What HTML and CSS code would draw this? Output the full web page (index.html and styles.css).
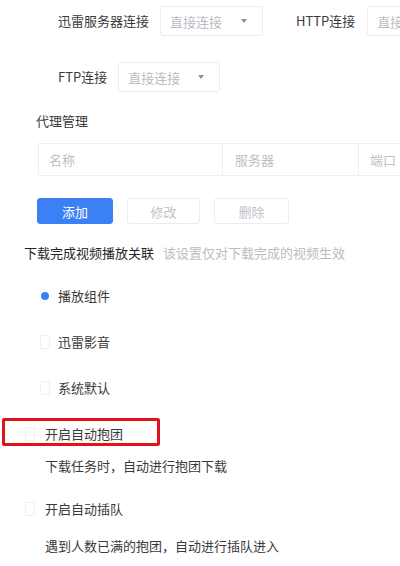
FILE: index.html
```html
<!DOCTYPE html>
<html lang="zh-CN">
<head>
<meta charset="utf-8">
<link rel="stylesheet" href="styles.css">
</head>
<body>
<div class="page">
  <div class="conn-row row1">
    <span class="label">迅雷服务器连接</span>
    <div class="select w103"><span class="ph">直接连接</span><span class="arrow"></span></div>
    <span class="label http">HTTP连接</span>
    <div class="select w103"><span class="ph">直接连接</span><span class="arrow"></span></div>
  </div>
  <div class="conn-row row2">
    <span class="label">FTP连接</span>
    <div class="select w102"><span class="ph">直接连接</span><span class="arrow"></span></div>
  </div>

  <div class="section-title">代理管理</div>
  <div class="proxy-table">
    <div class="cell c1">名称</div>
    <div class="cell c2">服务器</div>
    <div class="cell c3">端口</div>
  </div>
  <div class="btns">
    <button class="btn primary">添加</button>
    <button class="btn">修改</button>
    <button class="btn del">删除</button>
  </div>

  <div class="heading">下载完成视频播放关联<span class="hint">该设置仅对下载完成的视频生效</span></div>

  <div class="opt opt1"><span class="radio on"></span><span>播放组件</span></div>
  <div class="opt opt2"><span class="box"></span><span>迅雷影音</span></div>
  <div class="opt opt3"><span class="box"></span><span>系统默认</span></div>

  <div class="check check1"><span class="box"></span><span>开启自动抱团</span><div class="highlight"></div></div>
  <div class="desc desc1">下载任务时，自动进行抱团下载</div>
  <div class="check check2"><span class="box"></span><span>开启自动插队</span></div>
  <div class="desc desc2">遇到人数已满的抱团，自动进行插队进入</div>
</div>
</body>
</html>
```

FILE: styles.css
```css
html, body {
  margin: 0;
  padding: 0;
  background: #ffffff;
}
body {
  width: 400px;
  height: 566px;
  overflow: hidden;
  font-family: "Noto Sans CJK SC", "Noto Sans", sans-serif;
  font-size: 13px;
  color: #3a3a3a;
}
.page {
  display: flex;
  flex-direction: column;
  width: 400px;
}
.conn-row {
  display: flex;
  align-items: center;
  padding-left: 58px;
  height: 30px;
  white-space: nowrap;
}
.row1 { margin-top: 6px; }
.row2 { margin-top: 26px; }
.label {
  line-height: 20px;
  color: #3a3a3a;
  margin-right: 11px;
}
.label.http {
  margin-left: 33px;
  margin-right: 12px;
}
.select {
  flex: none;
  box-sizing: border-box;
  height: 30px;
  border: 1px solid #ececec;
  border-radius: 3px;
  display: flex;
  align-items: center;
  justify-content: space-between;
  padding: 0 15px 0 9px;
}
.w103 { width: 103px; }
.w102 { width: 102px; }
.ph { color: #b9bcc2; }
.arrow {
  width: 0;
  height: 0;
  border-left: 3px solid transparent;
  border-right: 3px solid transparent;
  border-top: 4px solid #8e9196;
}
.section-title {
  margin-top: 19px;
  margin-left: 36px;
  line-height: 20px;
  color: #3a3a3a;
}
.proxy-table {
  margin-top: 12px;
  margin-left: 38px;
  display: flex;
  height: 33px;
  box-sizing: border-box;
  border: 1px solid #efefef;
  border-right: none;
  width: 380px;
}
.cell {
  box-sizing: border-box;
  display: flex;
  align-items: center;
  padding-left: 10px;
  color: #bcbfc4;
  border-right: 1px solid #efefef;
}
.c1 { width: 184px; }
.c2 { width: 136px; padding-left: 12px; }
.c3 { flex: 1; padding-left: 11px; border-right: none; }
.btns {
  margin-top: 22px;
  margin-left: 37px;
  display: flex;
  gap: 14px;
}
.btn {
  box-sizing: border-box;
  height: 26px;
  width: 73px;
  border: 1px solid #ececec;
  border-radius: 3px;
  background: #fff;
  color: #bfc2c7;
  font-family: inherit;
  font-size: 13px;
  padding: 0;
}
.btn.primary {
  width: 76px;
  background: #3b80f4;
  border-color: #3b80f4;
  color: #fff;
}
.btn.del { width: 75px; }
.heading {
  margin-top: 19px;
  margin-left: 24px;
  line-height: 20px;
  color: #262626;
  white-space: nowrap;
}
.hint {
  margin-left: 9px;
  color: #b9bcc2;
}
.opt {
  display: flex;
  align-items: center;
  line-height: 20px;
  padding-left: 40px;
  color: #3a3a3a;
}
.opt > span:last-child { margin-left: 8px; }
.opt1 { margin-top: 23px; }
.opt2 { margin-top: 26px; }
.opt3 { margin-top: 26px; }
.radio {
  width: 10px;
  height: 10px;
  display: flex;
  align-items: center;
  justify-content: center;
}
.radio.on::after {
  content: "";
  width: 8px;
  height: 8px;
  border-radius: 50%;
  background: #3b80f4;
}
.box {
  box-sizing: border-box;
  width: 10px;
  height: 14px;
  border: 1px solid #f0f0f0;
  border-radius: 1px;
}
.check {
  position: relative;
  display: flex;
  align-items: center;
  line-height: 20px;
  padding-left: 25px;
  color: #3a3a3a;
}
.check > span:nth-child(2) { margin-left: 10px; }
.check1 { margin-top: 26px; }
.check2 { margin-top: 23px; }
.highlight {
  position: absolute;
  left: 2px;
  top: -6px;
  width: 158px;
  height: 28px;
  box-sizing: border-box;
  border: 3px solid #e2121c;
  border-radius: 2px;
}
.desc {
  margin-left: 45px;
  line-height: 20px;
  color: #3a3a3a;
}
.desc1 { margin-top: 12px; }
.desc2 { margin-top: 17px; }
```
